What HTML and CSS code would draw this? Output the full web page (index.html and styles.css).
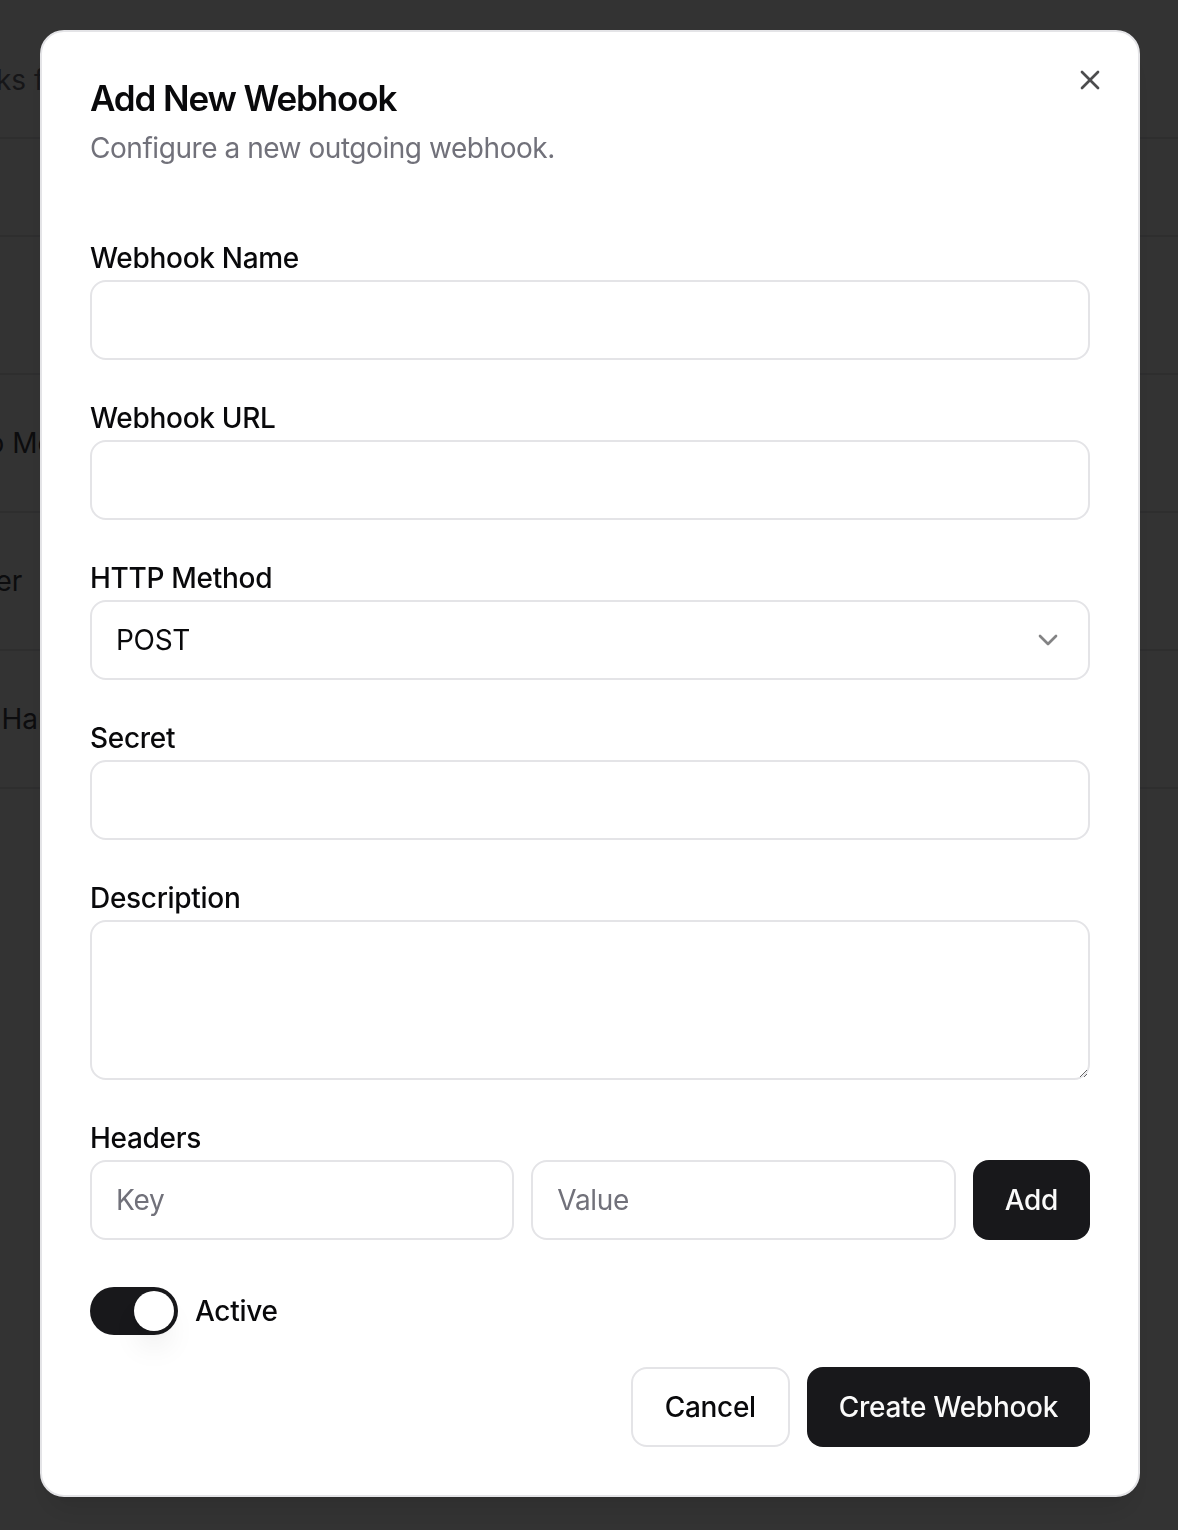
FILE: index.html
```html
<!DOCTYPE html>
<html lang="en">
<head>
<meta charset="utf-8">
<title>Add New Webhook</title>
<link rel="stylesheet" href="styles.css">
</head>
<body>
<div class="page">
  <p class="page-desc">All hooks for your workspace.</p>
  <div class="table">
    <div class="row row-head">Name</div>
    <div class="row">Slack</div>
    <div class="row">Push to Members</div>
    <div class="row">CI Mailer</div>
    <div class="row">Events Handler</div>
  </div>
</div>

<div class="overlay">
  <div class="dialog" role="dialog" aria-labelledby="dlg-title">
    <button class="close" type="button" aria-label="Close">
      <svg width="32" height="32" viewBox="0 0 24 24" fill="none" stroke="currentColor" stroke-width="2" stroke-linecap="round" stroke-linejoin="round"><path d="M18 6 6 18"/><path d="m6 6 12 12"/></svg>
    </button>
    <div class="dialog-header">
      <h2 id="dlg-title" class="dialog-title">Add New Webhook</h2>
      <p class="dialog-desc">Configure a new outgoing webhook.</p>
    </div>

    <form class="form">
      <div class="field">
        <label class="label" for="wh-name">Webhook Name</label>
        <input class="input" id="wh-name" type="text">
      </div>
      <div class="field">
        <label class="label" for="wh-url">Webhook URL</label>
        <input class="input" id="wh-url" type="text">
      </div>
      <div class="field">
        <label class="label">HTTP Method</label>
        <div class="select">
          <span>POST</span>
          <svg class="chev" width="32" height="32" viewBox="0 0 24 24" fill="none" stroke="currentColor" stroke-width="2" stroke-linecap="round" stroke-linejoin="round"><path d="m6 9 6 6 6-6"/></svg>
        </div>
      </div>
      <div class="field">
        <label class="label" for="wh-secret">Secret</label>
        <input class="input" id="wh-secret" type="text">
      </div>
      <div class="field">
        <label class="label" for="wh-desc">Description</label>
        <textarea class="textarea" id="wh-desc"></textarea>
      </div>
      <div class="field">
        <label class="label">Headers</label>
        <div class="headers-row">
          <input class="input grow" type="text" placeholder="Key">
          <input class="input grow" type="text" placeholder="Value">
          <button class="btn btn-dark" type="button">Add</button>
        </div>
      </div>
      <div class="switch-row">
        <span class="switch"><span class="thumb"></span></span>
        <span class="switch-label">Active</span>
      </div>
      <div class="footer">
        <button class="btn btn-outline" type="button">Cancel</button>
        <button class="btn btn-dark" type="button">Create Webhook</button>
      </div>
    </form>
  </div>
</div>
</body>
</html>
```

FILE: styles.css
```css
* { box-sizing: border-box; }

html, body {
  margin: 0;
  padding: 0;
  background: #ffffff;
  font-family: "Inter", "Noto Sans", sans-serif;
  color: #09090b;
  letter-spacing: -0.3px;
}

/* background page */
.page {
  margin-left: -95px;
  padding-top: 60px;
  letter-spacing: 0;
}
.page-desc {
  margin: 0;
  font-size: 28px;
  line-height: 40px;
  color: #71717a;
}
.table {
  margin-top: 37px;
  border-top: 2px solid #e4e4e7;
}
.row {
  height: 138px;
  display: flex;
  align-items: center;
  font-size: 28px;
  color: #3f3f46;
  border-bottom: 2px solid #e4e4e7;
}
.row-head {
  height: 98px;
  color: #71717a;
}

/* overlay + dialog */
.overlay {
  position: fixed;
  inset: 0;
  background: rgba(0, 0, 0, 0.8);
  padding: 30px 0 0 40px;
}
.dialog {
  position: relative;
  width: 1100px;
  background: #ffffff;
  border: 2px solid #e4e4e7;
  border-radius: 24px;
  padding: 48px;
  box-shadow: 0 20px 30px -6px rgba(0,0,0,0.1), 0 8px 12px -8px rgba(0,0,0,0.1);
}
.close {
  position: absolute;
  top: 32px;
  right: 32px;
  width: 32px;
  height: 32px;
  padding: 0;
  border: 0;
  background: transparent;
  color: #09090b;
  opacity: 0.72;
  display: flex;
}

.dialog-header {
  display: flex;
  flex-direction: column;
  gap: 12px;
}
.dialog-title {
  margin: 0;
  font-size: 35px;
  line-height: 36px;
  font-weight: 600;
  letter-spacing: -1.1px;
}
.dialog-desc {
  margin: 0;
  font-size: 28px;
  line-height: 40px;
  color: #71717a;
  letter-spacing: -0.45px;
}

.form {
  margin-top: 76px;
  display: flex;
  flex-direction: column;
}
.field {
  display: flex;
  flex-direction: column;
  margin-bottom: 44px;
}
.label {
  font-size: 28px;
  line-height: 28px;
  font-weight: 500;
  margin-bottom: 8px;
}
.input {
  height: 80px;
  width: 100%;
  border: 2px solid #e4e4e7;
  border-radius: 16px;
  background: #ffffff;
  padding: 0 24px;
  font-family: inherit;
  font-size: 28px;
  letter-spacing: -0.3px;
  color: #09090b;
  outline: none;
}
.input::placeholder { color: #71717a; }
.select {
  height: 80px;
  border: 2px solid #e4e4e7;
  border-radius: 16px;
  padding: 0 24px;
  display: flex;
  align-items: center;
  justify-content: space-between;
  font-size: 28px;
}
.chev {
  color: #09090b;
  opacity: 0.5;
}
.textarea {
  height: 160px;
  width: 100%;
  border: 2px solid #e4e4e7;
  border-radius: 16px;
  padding: 16px 24px;
  font-family: inherit;
  font-size: 28px;
  resize: vertical;
  outline: none;
  display: block;
}
.headers-row {
  display: flex;
  gap: 17px;
}
.grow {
  flex: 1 1 0;
  min-width: 0;
}

.btn {
  height: 80px;
  padding: 0 32px;
  border-radius: 16px;
  font-family: inherit;
  font-size: 28px;
  font-weight: 500;
  letter-spacing: -0.3px;
  display: inline-flex;
  align-items: center;
  justify-content: center;
  flex: none;
}
.btn-dark {
  background: #18181b;
  color: #fafafa;
  border: 0;
}
.btn-outline {
  background: #ffffff;
  color: #09090b;
  border: 2px solid #e4e4e7;
}

.switch-row {
  margin-top: 3px;
  display: flex;
  align-items: center;
  gap: 17px;
}
.switch {
  width: 88px;
  height: 48px;
  border-radius: 999px;
  background: #18181b;
  border: 4px solid transparent;
  display: flex;
  justify-content: flex-end;
}
.thumb {
  width: 40px;
  height: 40px;
  border-radius: 50%;
  background: #ffffff;
  box-shadow: 0 20px 30px -6px rgba(0,0,0,0.1), 0 8px 12px -8px rgba(0,0,0,0.1);
}
.switch-label {
  font-size: 28px;
  font-weight: 500;
}

.footer {
  margin-top: 32px;
  display: flex;
  justify-content: flex-end;
  gap: 17px;
}
```
